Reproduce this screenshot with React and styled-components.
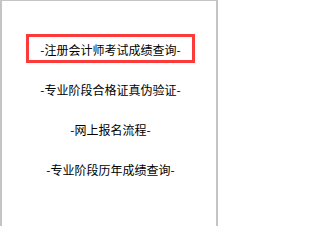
import React from "react";
import styled, { createGlobalStyle } from "styled-components";

const Global = createGlobalStyle`
  html, body { margin: 0; padding: 0; background: #fff; }
  body { font-family: "Noto Sans CJK SC", "Noto Sans", sans-serif; }
`;

const Panel = styled.div`
  box-sizing: border-box;
  width: 218px;
  height: 226px;
  border-top: 1px solid #c4c4c4;
  border-left: 2px solid #c4c4c4;
  border-right: 2px solid #c4c4c4;
  padding: 33px 0 0 24px;
  display: flex;
  flex-direction: column;
  gap: 11px;
`;

const Item = styled.a`
  box-sizing: border-box;
  display: block;
  width: 169px;
  height: 29px;
  border: 3px solid ${(p) => (p.$active ? "#fc3a3a" : "transparent")};
  padding-top: 1px;
  line-height: 23px;
  text-align: center;
  font-size: 12px;
  color: #000;
  text-decoration: none;
  white-space: nowrap;
`;

const items = [
  "注册会计师考试成绩查询",
  "专业阶段合格证真伪验证",
  "网上报名流程",
  "专业阶段历年成绩查询",
];

export default function App() {
  return (
    <>
      <Global />
      <Panel>
        {items.map((t, i) => (
          <Item key={t} href="#" $active={i === 0}>
            -{t}-
          </Item>
        ))}
      </Panel>
    </>
  );
}
